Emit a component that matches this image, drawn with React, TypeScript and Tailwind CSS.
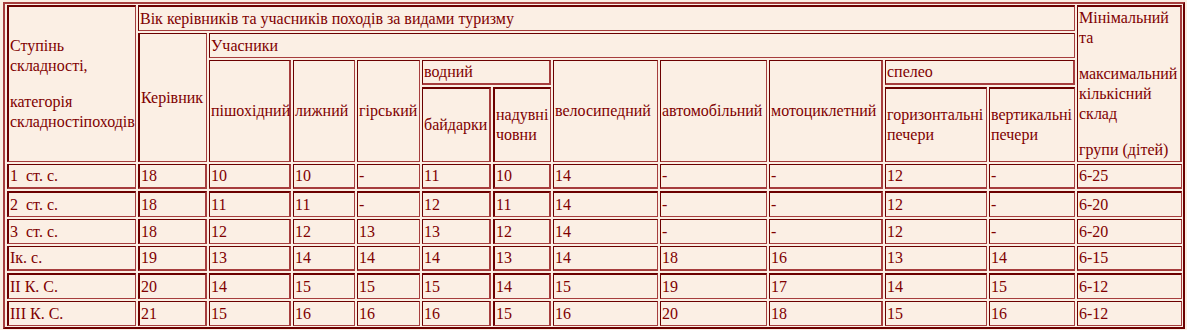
import React from "react";

const BASE =
  "flex items-center pl-[1px] border-solid border-t-[#6b0000] border-l-[#6b0000] border-r-[#a63d3d] border-b-[#a63d3d] whitespace-nowrap overflow-visible";

function Cell({ cls, children }: { cls: string; children?: React.ReactNode }) {
  return <div className={`${BASE} ${cls}`}>{children}</div>;
}

const COL_START = [
  "col-start-1",
  "col-start-2",
  "col-start-3",
  "col-start-4",
  "col-start-5",
  "col-start-6",
  "col-start-7",
  "col-start-8",
  "col-start-9",
  "col-start-10",
  "col-start-11",
  "col-start-12",
  "col-start-13",
];
const ROW_START = ["row-start-5", "row-start-6", "row-start-7", "row-start-8", "row-start-9", "row-start-10"];

const COL_L = ["border-l-2", "border-l-2", "border-l", "border-l", "border-l", "border-l", "border-l-2", "border-l", "border-l", "border-l", "border-l", "border-l", "border-l"];
const COL_R = ["border-r", "border-r-2", "border-r-2", "border-r", "border-r", "border-r-2", "border-r-2", "border-r", "border-r", "border-r-2", "border-r", "border-r", "border-r"];
const ROW_T = ["border-t", "border-t-2", "border-t", "border-t", "border-t-2", "border-t"];
const ROW_B = ["border-b-2", "border-b", "border-b", "border-b-2", "border-b", "border-b"];

const rows = [
  ["1\u00a0 ст. с.", "18", "10", "10", "-", "11", "10", "14", "-", "-", "12", "-", "6-25"],
  ["2\u00a0 ст. с.", "18", "11", "11", "-", "12", "11", "14", "-", "-", "12", "-", "6-20"],
  ["3\u00a0 ст. с.", "18", "12", "12", "13", "13", "12", "14", "-", "-", "12", "-", "6-20"],
  ["Ік. с.", "19", "13", "14", "14", "14", "13", "14", "18", "16", "13", "14", "6-15"],
  ["ІІ К. С.", "20", "14", "15", "15", "15", "14", "15", "19", "17", "14", "15", "6-12"],
  ["ІІІ К. С.", "21", "15", "16", "16", "16", "15", "16", "20", "18", "15", "16", "6-12"],
];

export default function App() {
  return (
    <div
      className="w-[1187px] h-[330px] bg-[#fbefe4] pl-[3px] pt-[2px] text-[#800000] text-[16px] leading-[20px]"
      style={{ fontFamily: '"Liberation Serif", "Times New Roman", serif' }}
    >
      <div className="w-fit border-2 border-solid border-t-[#a63d3d] border-l-[#a63d3d] border-r-[#6b0000] border-b-[#6b0000] pl-[2px] pt-[1px] pr-[1px] pb-[1px]">
        <div className="grid gap-[2px] grid-cols-[129px_69px_82px_62px_63px_69px_58px_105px_107px_114px_102px_86px_105px] grid-rows-[26px_25px_25px_75px_25px_26px_25px_25px_26px_25px]">
          {/* Header */}
          <Cell cls="col-start-1 row-start-1 row-span-4 border-t-2 border-l-2 border-r border-b">
            <div>
              <div>Ступінь</div>
              <div>складності,</div>
              <div className="mt-[16px]">категорія</div>
              <div>складностіпоходів</div>
            </div>
          </Cell>
          <Cell cls="col-start-2 col-span-11 row-start-1 border-t-2 border-l border-r border-b">
            Вік керівників та учасників походів за видами туризму
          </Cell>
          <Cell cls="col-start-13 row-start-1 row-span-4 border-t-2 border-l border-r-2 border-b">
            <div>
              <div>Мінімальний</div>
              <div>та</div>
              <div className="mt-[16px]">максимальний</div>
              <div>кількісний</div>
              <div>склад</div>
              <div className="mt-[16px]">групи (дітей)</div>
            </div>
          </Cell>
          <Cell cls="col-start-2 row-start-2 row-span-3 border-t border-l-2 border-r border-b">Керівник</Cell>
          <Cell cls="col-start-3 col-span-10 row-start-2 border-t border-l border-r border-b">Учасники</Cell>
          <Cell cls="col-start-3 row-start-3 row-span-2 border-t border-l border-r-2 border-b">пішохідний</Cell>
          <Cell cls="col-start-4 row-start-3 row-span-2 border-t border-l border-r border-b">лижний</Cell>
          <Cell cls="col-start-5 row-start-3 row-span-2 border-t border-l border-r border-b">гірський</Cell>
          <Cell cls="col-start-6 col-span-2 row-start-3 border-t border-l border-r-2 border-b-2">водний</Cell>
          <Cell cls="col-start-8 row-start-3 row-span-2 border-t border-l border-r border-b">велосипедний</Cell>
          <Cell cls="col-start-9 row-start-3 row-span-2 border-t border-l border-r border-b">автомобільний</Cell>
          <Cell cls="col-start-10 row-start-3 row-span-2 border-t border-l border-r-2 border-b">мотоциклетний</Cell>
          <Cell cls="col-start-11 col-span-2 row-start-3 border-t border-l border-r-2 border-b-2">спелео</Cell>
          <Cell cls="col-start-6 row-start-4 border-t-2 border-l border-r-2 border-b">байдарки</Cell>
          <Cell cls="col-start-7 row-start-4 border-t-2 border-l-2 border-r border-b">
            <div>
              <div>надувні</div>
              <div>човни</div>
            </div>
          </Cell>
          <Cell cls="col-start-11 row-start-4 border-t-2 border-l border-r border-b">
            <div>
              <div>горизонтальні</div>
              <div>печери</div>
            </div>
          </Cell>
          <Cell cls="col-start-12 row-start-4 border-t-2 border-l border-r border-b">
            <div>
              <div>вертикальні</div>
              <div>печери</div>
            </div>
          </Cell>

          {/* Data */}
          {rows.map((r, ri) =>
            r.map((v, ci) => (
              <Cell
                key={`${ri}-${ci}`}
                cls={`${COL_START[ci]} ${ROW_START[ri]} ${COL_L[ci]} ${COL_R[ci]} ${ROW_T[ri]} ${ROW_B[ri]}`}
              >
                {v}
              </Cell>
            ))
          )}
        </div>
      </div>
    </div>
  );
}
